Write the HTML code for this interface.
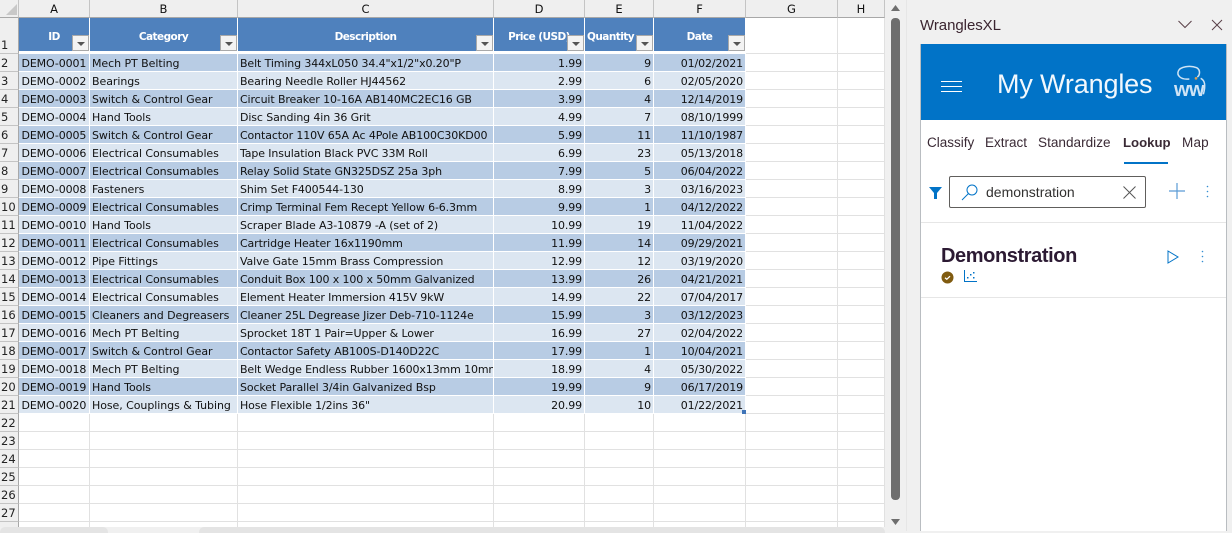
<!DOCTYPE html>
<html><head><meta charset="utf-8"><style>
html,body{margin:0;padding:0;width:1232px;height:531px;overflow:hidden;background:#f0f0f0}
*{box-sizing:border-box}
#sheet{position:absolute;left:0;top:0;width:885px;height:527px;background:#fff;overflow:hidden}
table{position:absolute;left:0;top:0;border-collapse:separate;border-spacing:0;table-layout:fixed;width:885px;font:11px "DejaVu Sans",sans-serif;color:#111}
td,th{padding:0;overflow:hidden;white-space:nowrap;height:18px;border-right:1px solid #e1e1e1;border-bottom:1px solid #e1e1e1;font-weight:normal;line-height:15px}
.ch td{background:#efefef;text-align:center;border-right:1px solid #c4c4c4;border-bottom:1px solid #a8a8a8;height:18px;font-size:11.5px;color:#111;padding-top:2px}
td.r{background:#efefef;border-right:1px solid #a8a8a8;border-bottom:1px solid #c4c4c4;font-size:11.5px;color:#222;padding:2px 0 0 1px;text-align:left}
tr.hd td{height:36px}
tr.hd td.h{background:#4f81bd;color:#fff;font-weight:bold;font-size:10.5px;letter-spacing:-.55px;text-align:center;border-right:1px solid #fff;border-bottom:3px solid #fff;position:relative;padding-top:6px;line-height:27px;vertical-align:top}
tr.hd td.r{vertical-align:bottom}
.f{position:absolute;right:0;bottom:0;width:17px;height:16px;background:#f3f3f3;border:1px solid #a9a9a9}
.f:after{content:"";position:absolute;left:4px;top:6px;border-left:4px solid transparent;border-right:4px solid transparent;border-top:4px solid #555}
.a td.d{background:#b8cce4}.b td.d{background:#dce6f1}
td.d{border-right:1px solid #fff;border-bottom:1px solid #fff;padding:2px 0 0 2px;letter-spacing:-.12px}
td.d:nth-child(2){padding-left:2.5px}
td.d:nth-child(3){letter-spacing:-.06px}
td.n{text-align:right;padding:2px 2px 0 0}
#scroll{position:absolute;left:885px;top:0;width:21px;height:531px;background:#f0f0f0}
#thumb{position:absolute;left:891px;top:18px;width:9px;height:482px;background:#6e6e6e;border-radius:4px}
.tab{position:absolute;top:527px;height:6px;background:#e4e4e4;border-radius:5px 5px 0 0}
#panel{position:absolute;left:920px;top:44px;width:307px;height:487px;background:#fff;border:1px solid #b9bdc1;border-bottom:0;border-top:0}
.t{position:absolute;font-family:"Liberation Sans",sans-serif;white-space:nowrap;color:#3a2a35}
svg{position:absolute;overflow:visible}
</style></head><body>
<div id="sheet">
<table>
<colgroup><col style="width:19px"><col style="width:71px"><col style="width:148px"><col style="width:256px"><col style="width:91px"><col style="width:69px"><col style="width:92px"><col style="width:92px"><col style="width:47px"></colgroup>
<tr class="ch"><td></td><td>A</td><td>B</td><td>C</td><td>D</td><td>E</td><td>F</td><td>G</td><td>H</td></tr>
<tr class="hd"><td class="r">1</td><td class="h">ID<i class="f"></i></td><td class="h">Category<i class="f"></i></td><td class="h">Description<i class="f"></i></td><td class="h">Price (USD)<i class="f"></i></td><td class="h" style="text-align:left;padding-left:2px">Quantity<i class="f"></i></td><td class="h">Date<i class="f"></i></td><td></td><td></td></tr>
<tr class="a"><td class="r">2</td><td class="d">DEMO-0001</td><td class="d">Mech PT Belting</td><td class="d">Belt Timing 344xL050 34.4"x1/2"x0.20"P</td><td class="d n">1.99</td><td class="d n">9</td><td class="d n">01/02/2021</td><td></td><td></td></tr>
<tr class="b"><td class="r">3</td><td class="d">DEMO-0002</td><td class="d">Bearings</td><td class="d">Bearing Needle Roller HJ44562</td><td class="d n">2.99</td><td class="d n">6</td><td class="d n">02/05/2020</td><td></td><td></td></tr>
<tr class="a"><td class="r">4</td><td class="d">DEMO-0003</td><td class="d">Switch &amp; Control Gear</td><td class="d">Circuit Breaker 10-16A AB140MC2EC16 GB</td><td class="d n">3.99</td><td class="d n">4</td><td class="d n">12/14/2019</td><td></td><td></td></tr>
<tr class="b"><td class="r">5</td><td class="d">DEMO-0004</td><td class="d">Hand Tools</td><td class="d">Disc Sanding 4in 36 Grit</td><td class="d n">4.99</td><td class="d n">7</td><td class="d n">08/10/1999</td><td></td><td></td></tr>
<tr class="a"><td class="r">6</td><td class="d">DEMO-0005</td><td class="d">Switch &amp; Control Gear</td><td class="d">Contactor 110V 65A Ac 4Pole AB100C30KD00</td><td class="d n">5.99</td><td class="d n">11</td><td class="d n">11/10/1987</td><td></td><td></td></tr>
<tr class="b"><td class="r">7</td><td class="d">DEMO-0006</td><td class="d">Electrical Consumables</td><td class="d">Tape Insulation Black PVC 33M Roll</td><td class="d n">6.99</td><td class="d n">23</td><td class="d n">05/13/2018</td><td></td><td></td></tr>
<tr class="a"><td class="r">8</td><td class="d">DEMO-0007</td><td class="d">Electrical Consumables</td><td class="d">Relay Solid State GN325DSZ 25a 3ph</td><td class="d n">7.99</td><td class="d n">5</td><td class="d n">06/04/2022</td><td></td><td></td></tr>
<tr class="b"><td class="r">9</td><td class="d">DEMO-0008</td><td class="d">Fasteners</td><td class="d">Shim Set F400544-130</td><td class="d n">8.99</td><td class="d n">3</td><td class="d n">03/16/2023</td><td></td><td></td></tr>
<tr class="a"><td class="r">10</td><td class="d">DEMO-0009</td><td class="d">Electrical Consumables</td><td class="d">Crimp Terminal Fem Recept Yellow 6-6.3mm</td><td class="d n">9.99</td><td class="d n">1</td><td class="d n">04/12/2022</td><td></td><td></td></tr>
<tr class="b"><td class="r">11</td><td class="d">DEMO-0010</td><td class="d">Hand Tools</td><td class="d">Scraper Blade A3-10879 -A (set of 2)</td><td class="d n">10.99</td><td class="d n">19</td><td class="d n">11/04/2022</td><td></td><td></td></tr>
<tr class="a"><td class="r">12</td><td class="d">DEMO-0011</td><td class="d">Electrical Consumables</td><td class="d">Cartridge Heater 16x1190mm</td><td class="d n">11.99</td><td class="d n">14</td><td class="d n">09/29/2021</td><td></td><td></td></tr>
<tr class="b"><td class="r">13</td><td class="d">DEMO-0012</td><td class="d">Pipe Fittings</td><td class="d">Valve Gate 15mm Brass Compression</td><td class="d n">12.99</td><td class="d n">12</td><td class="d n">03/19/2020</td><td></td><td></td></tr>
<tr class="a"><td class="r">14</td><td class="d">DEMO-0013</td><td class="d">Electrical Consumables</td><td class="d">Conduit Box 100 x 100 x 50mm Galvanized</td><td class="d n">13.99</td><td class="d n">26</td><td class="d n">04/21/2021</td><td></td><td></td></tr>
<tr class="b"><td class="r">15</td><td class="d">DEMO-0014</td><td class="d">Electrical Consumables</td><td class="d">Element Heater Immersion 415V 9kW</td><td class="d n">14.99</td><td class="d n">22</td><td class="d n">07/04/2017</td><td></td><td></td></tr>
<tr class="a"><td class="r">16</td><td class="d">DEMO-0015</td><td class="d">Cleaners and Degreasers</td><td class="d">Cleaner 25L Degrease Jizer Deb-710-1124e</td><td class="d n">15.99</td><td class="d n">3</td><td class="d n">03/12/2023</td><td></td><td></td></tr>
<tr class="b"><td class="r">17</td><td class="d">DEMO-0016</td><td class="d">Mech PT Belting</td><td class="d">Sprocket 18T 1 Pair=Upper &amp; Lower</td><td class="d n">16.99</td><td class="d n">27</td><td class="d n">02/04/2022</td><td></td><td></td></tr>
<tr class="a"><td class="r">18</td><td class="d">DEMO-0017</td><td class="d">Switch &amp; Control Gear</td><td class="d">Contactor Safety AB100S-D140D22C</td><td class="d n">17.99</td><td class="d n">1</td><td class="d n">10/04/2021</td><td></td><td></td></tr>
<tr class="b"><td class="r">19</td><td class="d">DEMO-0018</td><td class="d">Mech PT Belting</td><td class="d">Belt Wedge Endless Rubber 1600x13mm 10mm</td><td class="d n">18.99</td><td class="d n">4</td><td class="d n">05/30/2022</td><td></td><td></td></tr>
<tr class="a"><td class="r">20</td><td class="d">DEMO-0019</td><td class="d">Hand Tools</td><td class="d">Socket Parallel 3/4in Galvanized Bsp</td><td class="d n">19.99</td><td class="d n">9</td><td class="d n">06/17/2019</td><td></td><td></td></tr>
<tr class="b"><td class="r">21</td><td class="d">DEMO-0020</td><td class="d">Hose, Couplings &amp; Tubing</td><td class="d">Hose Flexible 1/2ins 36"</td><td class="d n">20.99</td><td class="d n">10</td><td class="d n">01/22/2021</td><td></td><td></td></tr>
<tr><td class="r">22</td><td></td><td></td><td></td><td></td><td></td><td></td><td></td><td></td></tr>
<tr><td class="r">23</td><td></td><td></td><td></td><td></td><td></td><td></td><td></td><td></td></tr>
<tr><td class="r">24</td><td></td><td></td><td></td><td></td><td></td><td></td><td></td><td></td></tr>
<tr><td class="r">25</td><td></td><td></td><td></td><td></td><td></td><td></td><td></td><td></td></tr>
<tr><td class="r">26</td><td></td><td></td><td></td><td></td><td></td><td></td><td></td><td></td></tr>
<tr><td class="r">27</td><td></td><td></td><td></td><td></td><td></td><td></td><td></td><td></td></tr>
<tr><td class="r"></td><td></td><td></td><td></td><td></td><td></td><td></td><td></td><td></td></tr>
</table>
<svg style="left:6px;top:4px" width="11" height="11"><path d="M11 0V11H0Z" fill="#c8c8c8"/></svg>
<div style="position:absolute;left:742px;top:410px;width:4px;height:4px;background:#3f74b8"></div>
</div>
<div id="scroll"></div>
<div id="thumb"></div>
<svg style="left:891px;top:5px" width="9" height="6"><path d="M4.5 0L9 6H0Z" fill="#6e6e6e"/></svg>
<svg style="left:891px;top:519px" width="9" height="6"><path d="M0 0H9L4.5 6Z" fill="#6e6e6e"/></svg>
<div style="position:absolute;left:906px;top:0;width:1px;height:531px;background:#e6e6e6"></div>
<div class="tab" style="left:0;width:108px"></div>
<div class="tab" style="left:199px;width:686px"></div>

<div class="t" style="left:920px;top:17px;font-size:15px;color:#3b2530;letter-spacing:-.05px">WranglesXL</div>
<svg style="left:1178px;top:20px" width="14" height="9" fill="none" stroke="#5a4048"><path d="M.5 1L7 7.5 13.5 1"/></svg>
<svg style="left:1211px;top:19px" width="12" height="12" fill="none" stroke="#5a4048"><path d="M1 1L11 11M11 1L1 11"/></svg>

<div id="panel"></div>
<div style="position:absolute;left:921px;top:44px;width:305px;height:76px;background:#0173c7"></div>
<svg style="left:941px;top:80px" width="21" height="12" stroke="#fff" stroke-width="1"><path d="M0 1.5H21M0 6.5H21M0 11.5H21"/></svg>
<div class="t" style="left:997px;top:69px;font-size:27px;color:#f2f8fd;letter-spacing:-.15px">My Wrangles</div>
<svg style="left:1160px;top:55px" width="60" height="50" viewBox="0 0 180 150" fill="none" stroke="#cfe4f5" stroke-width="4.500"><path d="M88 72C60 75 50 60 55 48 60 35 90 30 110 38 122 45 120 60 112 66"/><path d="M122 70C133 75 138 90 130 118"/><circle cx="108" cy="70" r="4" fill="#e0a050" stroke="none"/></svg>
<div class="t" style="left:1174px;top:79px;font-size:20px;font-weight:bold;color:#cfe4f5;letter-spacing:-.5px">ww</div>

<div class="t" style="left:927px;top:135px;font-size:13.5px">Classify</div>
<div class="t" style="left:985px;top:135px;font-size:13.5px">Extract</div>
<div class="t" style="left:1038px;top:135px;font-size:13.6px">Standardize</div>
<div class="t" style="left:1123px;top:135px;font-size:13.2px;font-weight:bold">Lookup</div>
<div class="t" style="left:1182px;top:135px;font-size:13.5px;letter-spacing:.2px">Map</div>
<div style="position:absolute;left:1124px;top:162px;width:44px;height:2px;background:#0173c7"></div>

<svg style="left:929px;top:187px" width="13" height="12"><path d="M0 0H13L8 6V12H5V6Z" fill="#0173c7"/></svg>
<div style="position:absolute;left:949px;top:176px;width:197px;height:32px;border:1px solid #605e5c;border-radius:2px;background:#fff"></div>
<svg style="left:961px;top:184px" width="17" height="17" fill="none" stroke="#0173c7"><circle cx="11" cy="6" r="5"/><path d="M7.500 9.500L1 16"/></svg>
<div class="t" style="left:986px;top:184px;font-size:14px;color:#323130">demonstration</div>
<svg style="left:1123px;top:186px" width="13" height="13" fill="none" stroke="#555"><path d="M.5.5L12.500 12.500M12.500.5L.5 12.500"/></svg>
<svg style="left:1169px;top:183px" width="16" height="16" stroke="#5b9bd5" stroke-width="1.200"><path d="M8 0V16M0 8H16"/></svg>
<svg style="left:1206px;top:185px" width="3" height="13" fill="#0173c7" opacity=".8"><circle cx="1.500" cy="1.500" r=".8"/><circle cx="1.500" cy="6.500" r=".8"/><circle cx="1.500" cy="11.500" r=".8"/></svg>
<div style="position:absolute;left:921px;top:222px;width:305px;height:1px;background:#e6e6e6"></div>

<div class="t" style="left:941px;top:245px;font-size:20px;color:#2c1a33;font-weight:bold;letter-spacing:-.4px">Demonstration</div>
<svg style="left:1167px;top:250px" width="12" height="14" fill="none" stroke="#0173c7"><path d="M1 1L11 7 1 13Z"/></svg>
<svg style="left:1201px;top:250px" width="3" height="13" fill="#0173c7" opacity=".8"><circle cx="1.500" cy="1.500" r=".8"/><circle cx="1.500" cy="6.500" r=".8"/><circle cx="1.500" cy="11.500" r=".8"/></svg>
<svg style="left:941px;top:271px" width="13" height="13"><circle cx="6.500" cy="6.500" r="6" fill="#805b10"/><path d="M4 6.800L5.800 8.300 9 5.200" fill="none" stroke="#fff" stroke-width="1.300"/></svg>
<svg style="left:964px;top:270px" width="13" height="12" fill="#0173c7"><path d="M.5 0V11.500H13" fill="none" stroke="#0173c7"/><rect x="3" y="7" width="1.500" height="1.500"/><rect x="6" y="4" width="1.500" height="1.500"/><rect x="9" y="2" width="1.500" height="1.500"/><rect x="9" y="7" width="1.500" height="1.500"/></svg>
<div style="position:absolute;left:921px;top:297px;width:305px;height:1px;background:#e6e6e6"></div>
</body></html>
